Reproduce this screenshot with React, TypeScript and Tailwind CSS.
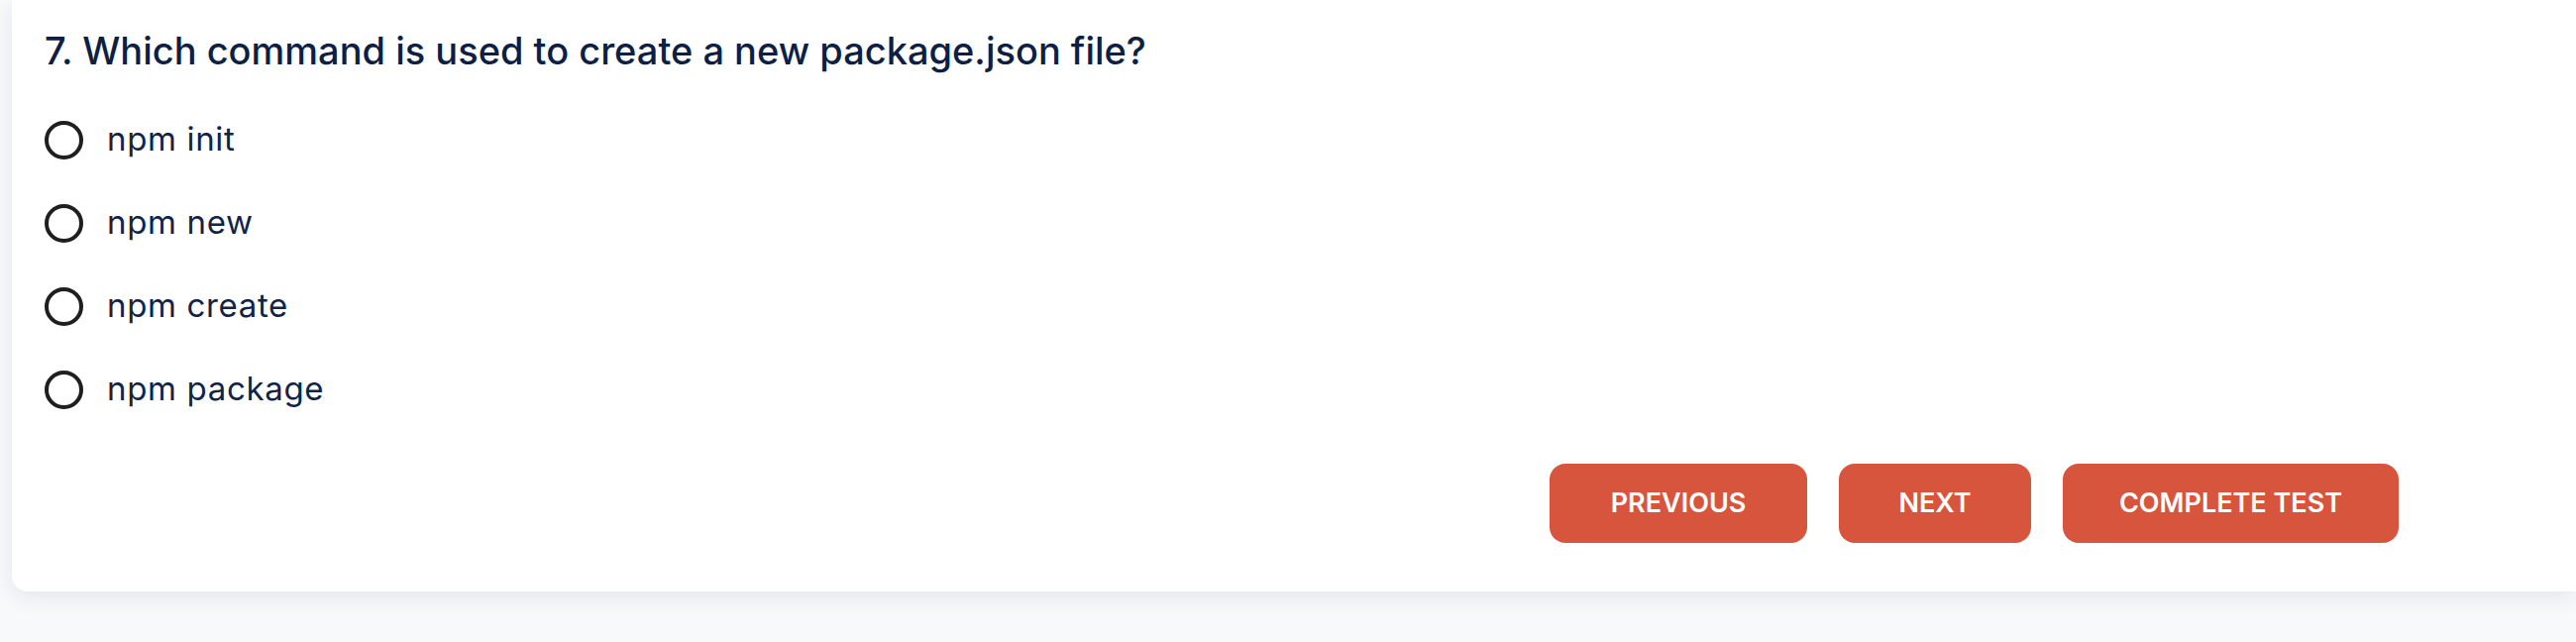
import React from "react";

const options = ["npm init", "npm new", "npm create", "npm package"];

const QuizPage = () => {
  return (
    <div className="min-h-[648px] w-full bg-[#f8f9fb] pl-[12px] font-['Inter',sans-serif]">
      <div className="bg-white rounded-bl-[16px] shadow-[0_6px_22px_rgba(30,35,60,0.09)] pl-[33px] pt-[29px] pb-[49px]">
        <h2 className="text-[38px] leading-[45px] font-medium text-[#0d1f45]">
          7. Which command is used to create a new package.json file?
        </h2>
        <div className="mt-[25px] flex flex-col">
          {options.map((opt) => (
            <label key={opt} className="h-[84px] flex items-center gap-[24px] cursor-pointer">
              <span className="w-[39px] h-[39px] rounded-full border-[4px] border-[#1f1f1f] shrink-0" />
              <span className="text-[33px] tracking-[0.02em] text-[#112448]">{opt}</span>
            </label>
          ))}
        </div>
        <div className="mt-[33px] flex justify-end gap-[32px] pr-[179px]">
          <button className="w-[260px] h-[80px] rounded-[16px] bg-[#d8553d] text-white text-[27px] font-semibold">
            PREVIOUS
          </button>
          <button className="w-[194px] h-[80px] rounded-[16px] bg-[#d8553d] text-white text-[27px] font-semibold">
            NEXT
          </button>
          <button className="w-[339px] h-[80px] rounded-[16px] bg-[#d8553d] text-white text-[27px] font-semibold">
            COMPLETE TEST
          </button>
        </div>
      </div>
    </div>
  );
};

export default QuizPage;
